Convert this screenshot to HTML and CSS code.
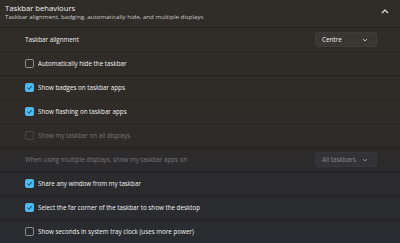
FILE: index.html
```html
<!DOCTYPE html>
<html lang="en">
<head>
    <meta charset="UTF-8">
    <meta name="viewport" content="width=device-width, initial-scale=1.0">
    <title>Taskbar behaviours</title>
    <link rel="stylesheet" href="styles.css">
</head>
<body>
    <div class="panel">
        <div class="head">
            <div class="head-text">
                <div class="title">Taskbar behaviours</div>
                <div class="subtitle">Taskbar alignment, badging, automatically hide, and multiple displays</div>
            </div>
            <svg class="collapse" width="8" height="5" viewBox="0 0 8 5">
                <polyline points="1,4 4,1 7,4" fill="none" stroke="#e6e6e6" stroke-width="1.2"/>
            </svg>
        </div>

        <div class="row">
            <span class="label">Taskbar alignment</span>
            <div class="select">
                <span>Centre</span>
                <svg width="6" height="4" viewBox="0 0 6 4"><polyline points="1,1 3,3 5,1" fill="none" stroke="#bdbdbd" stroke-width="1"/></svg>
            </div>
        </div>

        <div class="row">
            <span class="box"></span>
            <span class="label">Automatically hide the taskbar</span>
        </div>

        <div class="row">
            <span class="box checked"><svg width="9" height="9" viewBox="0 0 9 9"><polyline points="2.4,4.8 3.9,6.2 6.7,3" fill="none" stroke="#1b2a36" stroke-width="0.9"/></svg></span>
            <span class="label">Show badges on taskbar apps</span>
        </div>

        <div class="row">
            <span class="box checked"><svg width="9" height="9" viewBox="0 0 9 9"><polyline points="2.4,4.8 3.9,6.2 6.7,3" fill="none" stroke="#1b2a36" stroke-width="0.9"/></svg></span>
            <span class="label">Show flashing on taskbar apps</span>
        </div>

        <div class="row disabled">
            <span class="box"></span>
            <span class="label">Show my taskbar on all displays</span>
        </div>

        <div class="row disabled">
            <span class="label">When using multiple displays, show my taskbar apps on</span>
            <div class="select">
                <span>All taskbars</span>
                <svg width="6" height="4" viewBox="0 0 6 4"><polyline points="1,1 3,3 5,1" fill="none" stroke="#8a8a8a" stroke-width="1"/></svg>
            </div>
        </div>

        <div class="row">
            <span class="box checked"><svg width="9" height="9" viewBox="0 0 9 9"><polyline points="2.4,4.8 3.9,6.2 6.7,3" fill="none" stroke="#1b2a36" stroke-width="0.9"/></svg></span>
            <span class="label">Share any window from my taskbar</span>
        </div>

        <div class="row">
            <span class="box checked"><svg width="9" height="9" viewBox="0 0 9 9"><polyline points="2.4,4.8 3.9,6.2 6.7,3" fill="none" stroke="#1b2a36" stroke-width="0.9"/></svg></span>
            <span class="label">Select the far corner of the taskbar to show the desktop</span>
        </div>

        <div class="row">
            <span class="box"></span>
            <span class="label">Show seconds in system tray clock (uses more power)</span>
        </div>
    </div>
</body>
</html>
```

FILE: styles.css
```css
* {
    box-sizing: border-box;
    font-family: 'Open Sans', 'Noto Sans', sans-serif;
}

body {
    margin: 0;
    padding: 0;
    background: linear-gradient(to bottom, #302c27 0%, #2f2b27 45%, #2b2b2e 75%, #2a2b30 100%);
    color: #ffffff;
    height: 243px;
    overflow: hidden;
}

.panel {
    width: 400px;
}

.head {
    height: 28px;
    display: flex;
    align-items: center;
    justify-content: space-between;
    padding: 0 11px 2px 5px;
    border-bottom: 1px solid #25221f;
}

.title {
    font-size: 7.7px;
    line-height: 9px;
    color: #f2f2f2;
}

.subtitle {
    font-size: 6.15px;
    line-height: 8px;
    color: #c9c9c9;
}

.collapse {
    margin-top: -3px;
}

.row {
    height: 24px;
    display: flex;
    align-items: center;
    padding: 0 23px 0 25px;
    border-bottom: 1px solid #25221f;
    font-size: 6.25px;
    color: #f2f2f2;
}

.row .label {
    flex: 1;
}

.box {
    width: 9px;
    height: 9px;
    margin-right: 4px;
    border: 1px solid #8d8b88;
    border-radius: 2px;
    display: flex;
}

.box.checked {
    background-color: #4cb9f0;
    border-color: #4cb9f0;
}

.box.checked svg {
    margin: -1px;
}

.select {
    width: 62px;
    height: 15px;
    display: flex;
    align-items: center;
    justify-content: space-between;
    padding: 0 8px 0 6px;
    background-color: #3a3632;
    border: 1px solid #403c37;
    border-radius: 3px;
    font-size: 6.3px;
    color: #f0f0f0;
}

.disabled {
    color: #77767a;
}

.disabled .box {
    border-color: #4a4845;
}

.disabled .select {
    background-color: #333337;
    border-color: #38383c;
    color: #8a8a8e;
}
```
